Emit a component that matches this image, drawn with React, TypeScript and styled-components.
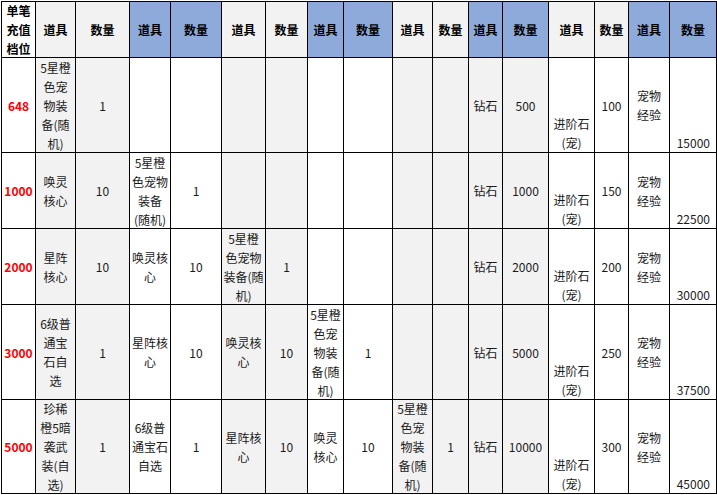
import styled, { createGlobalStyle } from 'styled-components'

const GlobalStyle = createGlobalStyle`
  html, body {
    margin: 0;
    padding: 0;
    background: #ffffff;
  }
  body {
    font-family: "Noto Sans CJK SC", "Noto Sans", sans-serif;
    color: #000000;
  }
`

type Cell = { t: string; bottom?: boolean; right?: boolean }

const widths = [34, 40, 54, 41, 51, 44, 42, 36, 49, 40, 36, 34, 46, 46, 34, 41, 47]
const blueHead = [3, 4, 7, 8, 11, 12, 15, 16]
const greyBody = [1, 2, 5, 6, 9, 10, 11, 12]

const tier = (items: string[], diamond: string, stone: string, exp: string): Cell[] => {
  const cells: Cell[] = items.map((t) => ({ t }))
  while (cells.length < 10) cells.push({ t: '' })
  return [
    ...cells,
    { t: '钻石' },
    { t: diamond },
    { t: '进阶石\n(宠)', bottom: true },
    { t: stone },
    { t: '宠物\n经验' },
    { t: exp, bottom: true, right: true },
  ]
}

const rows = [
  { amount: '648', h: 95, cells: tier(['5星橙\n色宠\n物装\n备(随\n机)', '1'], '500', '100', '15000') },
  {
    amount: '1000',
    h: 76,
    cells: tier(['唤灵\n核心', '10', '5星橙\n色宠物\n装备\n(随机)', '1'], '1000', '150', '22500'),
  },
  {
    amount: '2000',
    h: 76,
    cells: tier(['星阵\n核心', '10', '唤灵核\n心', '10', '5星橙\n色宠物\n装备(随\n机)', '1'], '2000', '200', '30000'),
  },
  {
    amount: '3000',
    h: 95,
    cells: tier(
      ['6级普\n通宝\n石自\n选', '1', '星阵核\n心', '10', '唤灵核\n心', '10', '5星橙\n色宠\n物装\n备(随\n机)', '1'],
      '5000',
      '250',
      '37500'
    ),
  },
  {
    amount: '5000',
    h: 94,
    cells: tier(
      [
        '珍稀\n橙5暗\n袭武\n装(自\n选)',
        '1',
        '6级普\n通宝石\n自选',
        '1',
        '星阵核\n心',
        '10',
        '唤灵\n核心',
        '10',
        '5星橙\n色宠\n物装\n备(随\n机)',
        '1',
      ],
      '10000',
      '300',
      '45000'
    ),
  },
]

const Sheet = styled.table`
  border-collapse: collapse;
  table-layout: fixed;
  width: 716px;
  margin: 1px 0 0 1px;
  font-size: 12px;
  line-height: 19px;
`

const HeadCell = styled.th<{ $tone: 'white' | 'grey' | 'blue' }>`
  border: 1px solid #000000;
  padding: 0;
  font-weight: 700;
  background: ${(p) => (p.$tone === 'blue' ? '#8eaadb' : p.$tone === 'grey' ? '#f2f2f2' : '#ffffff')};
`

const AmountCell = styled.td`
  border: 1px solid #000000;
  padding: 0;
  color: #ff0000;
  font-weight: 700;
  background: #ffffff;
`

const BodyCell = styled.td<{ $grey: boolean }>`
  border: 1px solid #000000;
  padding: 0;
  color: #1a1a1a;
  background: ${(p) => (p.$grey ? '#f2f2f2' : '#ffffff')};
`

const Inner = styled.div<{ $h: number; $bottom?: boolean; $right?: boolean }>`
  height: ${(p) => p.$h}px;
  display: flex;
  flex-direction: column;
  justify-content: ${(p) => (p.$bottom ? 'flex-end' : 'center')};
  align-items: ${(p) => (p.$right ? 'flex-end' : 'center')};
  padding-right: ${(p) => (p.$right ? '6px' : '0')};
  text-align: center;
  white-space: pre;
  overflow: visible;
`

const headers = ['单笔\n充值\n档位', ...Array.from({ length: 16 }, (_, i) => (i % 2 === 0 ? '道具' : '数量'))]

export default function App() {
  return (
    <>
      <GlobalStyle />
      <Sheet>
        <colgroup>
          {widths.map((w, i) => (
            <col key={i} style={{ width: w }} />
          ))}
        </colgroup>
        <thead>
          <tr>
            {headers.map((h, i) => (
              <HeadCell key={i} $tone={i === 0 ? 'white' : blueHead.includes(i) ? 'blue' : 'grey'}>
                <Inner $h={55}>{h}</Inner>
              </HeadCell>
            ))}
          </tr>
        </thead>
        <tbody>
          {rows.map((r) => (
            <tr key={r.amount}>
              <AmountCell>
                <Inner $h={r.h - 1}>{r.amount}</Inner>
              </AmountCell>
              {r.cells.map((c, i) => (
                <BodyCell key={i} $grey={greyBody.includes(i + 1)}>
                  <Inner $h={r.h - 1} $bottom={c.bottom} $right={c.right}>
                    {c.t}
                  </Inner>
                </BodyCell>
              ))}
            </tr>
          ))}
        </tbody>
      </Sheet>
    </>
  )
}
